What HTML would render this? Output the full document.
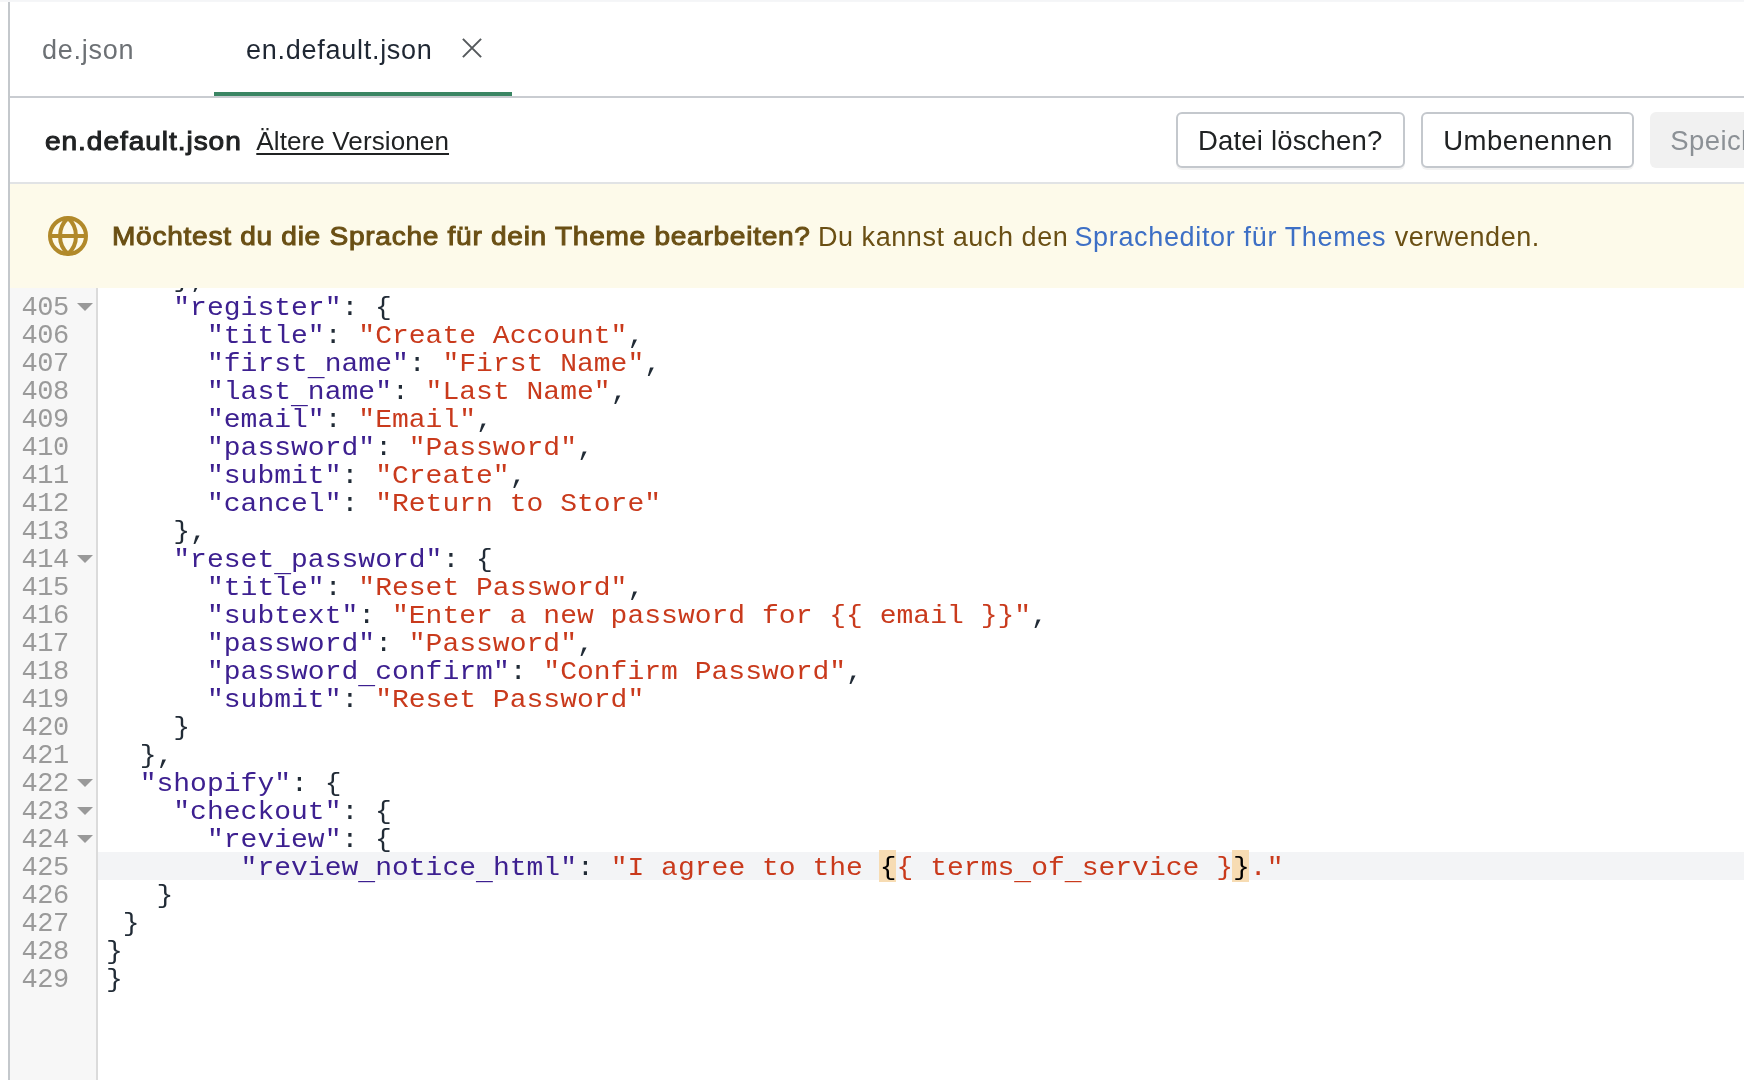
<!DOCTYPE html>
<html><head><meta charset="utf-8">
<style>
*{box-sizing:border-box;margin:0;padding:0}
html,body{width:1744px;height:1080px;overflow:hidden;background:#fff;font-family:"Liberation Sans",sans-serif;}
#root{will-change:transform;position:relative;width:1744px;height:1080px;overflow:hidden;background:#fff}
.abs{position:absolute}
.t{position:absolute;white-space:nowrap;line-height:1}
#topstrip{left:0;top:0;width:1744px;height:2px;background:linear-gradient(#f4f5f7 0,#f4f5f7 70%,#fafafb 100%)}
#lborder{left:8px;top:2px;width:2px;height:1078px;background:#c4c8cc}
#tabline{left:10px;top:96px;width:1734px;height:2px;background:#c9ccd1}
#tabactive{left:214px;top:92px;width:298px;height:4px;background:#3a8563}
#hdrline{left:10px;top:182px;width:1734px;height:2px;background:#e1e3e5}
#banner{left:10px;top:184px;width:1734px;height:104px;background:#fdfaea}
.sb{transform:scaleX(1.06);transform-origin:0 0}
.btn{position:absolute;top:112px;height:56px;border:2px solid #c4c8cd;border-radius:6px;background:#fff;box-shadow:0 2px 0 rgba(0,0,0,.05)}
#gutter{left:10px;top:288px;width:88px;height:792px;background:#f7f7f7;border-right:2px solid #dbdbdb;overflow:hidden}
#code{left:98px;top:288px;width:1646px;height:792px;overflow:hidden}
.ln{position:absolute;left:0;padding-left:8px;width:1646px;height:28px;font-family:"Liberation Mono",monospace;font-size:28px;letter-spacing:.017px;line-height:28px;white-space:pre;color:#212b36;transform:scaleY(.9);transform-origin:0 21.46px}
.gn{position:absolute;left:11.4px;width:70px;height:28px;font-family:"Liberation Mono",monospace;font-size:27px;letter-spacing:-.45px;line-height:28px;color:#9a9a9a;white-space:pre}
.k{color:#3d2090}.s{color:#c93a1c}
.fold{position:absolute;left:66.7px;width:0;height:0;border-left:8px solid transparent;border-right:8px solid transparent;border-top:8.5px solid #999}
.act{background:#f3f4f6}
.m{color:#000}
.u{position:relative;top:3.6px}
.mb{position:absolute;top:562px;width:17px;height:31.5px;background:#f7dcb3}
</style></head><body><div id="root">
<div class="abs" id="topstrip"></div>
<div class="abs" id="lborder"></div>

<div class="t" style="left:42.1px;top:36.8px;font-size:27px;letter-spacing:.73px;color:#6d7175">de.json</div>
<div class="t" style="left:246px;top:36.8px;font-size:27px;letter-spacing:.73px;color:#1f2733">en.default.json</div>
<svg class="abs" style="left:460.05px;top:36.25px" width="24" height="24" viewBox="0 0 24 24"><path d="M2.9 2.9 L21.1 21.1 M21.1 2.9 L2.9 21.1" stroke="#55595c" stroke-width="2" fill="none"/></svg>
<div class="abs" id="tabline"></div>
<div class="abs" id="tabactive"></div>

<div class="t sb" style="left:44.6px;top:127.6px;font-size:26.5px;letter-spacing:.88px;-webkit-text-stroke:1px #202223;color:#202223">en.default.json</div>
<div class="t" style="left:256.3px;top:127.9px;font-size:26px;letter-spacing:.12px;color:#202223;text-decoration:underline;text-decoration-thickness:1.5px;text-underline-offset:2.5px">Ältere Versionen</div>
<div class="btn" style="left:1176px;width:229px"></div>
<div class="t" style="left:1198px;top:126.8px;font-size:27.5px;letter-spacing:.18px;color:#202223">Datei löschen?</div>
<div class="btn" style="left:1421px;width:213px"></div>
<div class="t" style="left:1443.3px;top:126.8px;font-size:27.5px;letter-spacing:.44px;color:#202223">Umbenennen</div>
<div class="abs" style="left:1650px;top:112px;width:120px;height:56px;border-radius:6px;background:#f1f1f1"></div>
<div class="t" style="left:1670.3px;top:126.8px;font-size:27.5px;letter-spacing:.4px;color:#8c9196">Speichern</div>
<div class="abs" id="hdrline"></div>

<div class="abs" id="banner"></div>
<svg class="abs" style="left:48px;top:216px" width="40" height="40" viewBox="0 0 40 40"><g fill="none" stroke="#b1892a" stroke-width="4"><circle cx="20" cy="20" r="18"/><path d="M20 2 A24.25 24.25 0 0 1 20 38 A24.25 24.25 0 0 1 20 2 Z" stroke-linejoin="round"/><path d="M2 20 H38"/></g></svg>
<div class="t sb" style="left:111.5px;top:223.3px;font-size:26.5px;letter-spacing:.67px;-webkit-text-stroke:1px #6a4f14;color:#6a4f14">Möchtest du die Sprache für dein Theme bearbeiten?</div>
<div class="t" style="left:817.9px;top:223.7px;font-size:27px;letter-spacing:.57px;color:#6a4f14">Du kannst auch den</div>
<div class="t" style="left:1074.4px;top:223.7px;font-size:27px;letter-spacing:.66px;color:#3d6fc5">Spracheditor für Themes</div>
<div class="t" style="left:1394.7px;top:223.7px;font-size:27px;letter-spacing:.56px;color:#6a4f14">verwenden.</div>

<!--GUT--><div class="abs" id="gutter">
<div class="gn" style="top:-22.1px">404</div>
<div class="gn" style="top:5.9px">405</div><div class="fold" style="top:14.8px"></div>
<div class="gn" style="top:33.9px">406</div>
<div class="gn" style="top:61.9px">407</div>
<div class="gn" style="top:89.9px">408</div>
<div class="gn" style="top:117.9px">409</div>
<div class="gn" style="top:145.9px">410</div>
<div class="gn" style="top:173.9px">411</div>
<div class="gn" style="top:201.9px">412</div>
<div class="gn" style="top:229.9px">413</div>
<div class="gn" style="top:257.9px">414</div><div class="fold" style="top:266.8px"></div>
<div class="gn" style="top:285.9px">415</div>
<div class="gn" style="top:313.9px">416</div>
<div class="gn" style="top:341.9px">417</div>
<div class="gn" style="top:369.9px">418</div>
<div class="gn" style="top:397.9px">419</div>
<div class="gn" style="top:425.9px">420</div>
<div class="gn" style="top:453.9px">421</div>
<div class="gn" style="top:481.9px">422</div><div class="fold" style="top:490.8px"></div>
<div class="gn" style="top:509.9px">423</div><div class="fold" style="top:518.8px"></div>
<div class="gn" style="top:537.9px">424</div><div class="fold" style="top:546.8px"></div>
<div class="gn" style="top:565.9px">425</div>
<div class="gn" style="top:593.9px">426</div>
<div class="gn" style="top:621.9px">427</div>
<div class="gn" style="top:649.9px">428</div>
<div class="gn" style="top:677.9px">429</div>
</div><!--/GUT-->
<!--CODE--><div class="abs" id="code">
<div class="abs act" style="left:0;top:564px;width:1646px;height:28px"></div>
<div class="mb" style="left:781.2px"></div><div class="mb" style="left:1134.4px"></div>
<div class="ln" style="top:-22.1px">    },</div>
<div class="ln" style="top:5.9px">    <span class="k">"register"</span>: {</div>
<div class="ln" style="top:33.9px">      <span class="k">"title"</span>: <span class="s">"Create Account"</span>,</div>
<div class="ln" style="top:61.9px">      <span class="k">"first<span class="u">_</span>name"</span>: <span class="s">"First Name"</span>,</div>
<div class="ln" style="top:89.9px">      <span class="k">"last<span class="u">_</span>name"</span>: <span class="s">"Last Name"</span>,</div>
<div class="ln" style="top:117.9px">      <span class="k">"email"</span>: <span class="s">"Email"</span>,</div>
<div class="ln" style="top:145.9px">      <span class="k">"password"</span>: <span class="s">"Password"</span>,</div>
<div class="ln" style="top:173.9px">      <span class="k">"submit"</span>: <span class="s">"Create"</span>,</div>
<div class="ln" style="top:201.9px">      <span class="k">"cancel"</span>: <span class="s">"Return to Store"</span></div>
<div class="ln" style="top:229.9px">    },</div>
<div class="ln" style="top:257.9px">    <span class="k">"reset<span class="u">_</span>password"</span>: {</div>
<div class="ln" style="top:285.9px">      <span class="k">"title"</span>: <span class="s">"Reset Password"</span>,</div>
<div class="ln" style="top:313.9px">      <span class="k">"subtext"</span>: <span class="s">"Enter a new password for {{ email }}"</span>,</div>
<div class="ln" style="top:341.9px">      <span class="k">"password"</span>: <span class="s">"Password"</span>,</div>
<div class="ln" style="top:369.9px">      <span class="k">"password<span class="u">_</span>confirm"</span>: <span class="s">"Confirm Password"</span>,</div>
<div class="ln" style="top:397.9px">      <span class="k">"submit"</span>: <span class="s">"Reset Password"</span></div>
<div class="ln" style="top:425.9px">    }</div>
<div class="ln" style="top:453.9px">  },</div>
<div class="ln" style="top:481.9px">  <span class="k">"shopify"</span>: {</div>
<div class="ln" style="top:509.9px">    <span class="k">"checkout"</span>: {</div>
<div class="ln" style="top:537.9px">      <span class="k">"review"</span>: {</div>
<div class="ln" style="top:565.9px">        <span class="k">"review<span class="u">_</span>notice<span class="u">_</span>html"</span>: <span class="s">"I agree to the <span class="m">{</span>{ terms<span class="u">_</span>of<span class="u">_</span>service }<span class="m">}</span>."</span></div>
<div class="ln" style="top:593.9px">   }</div>
<div class="ln" style="top:621.9px"> }</div>
<div class="ln" style="top:649.9px">}</div>
<div class="ln" style="top:677.9px">}</div>
</div><!--/CODE-->
</div></body></html>
